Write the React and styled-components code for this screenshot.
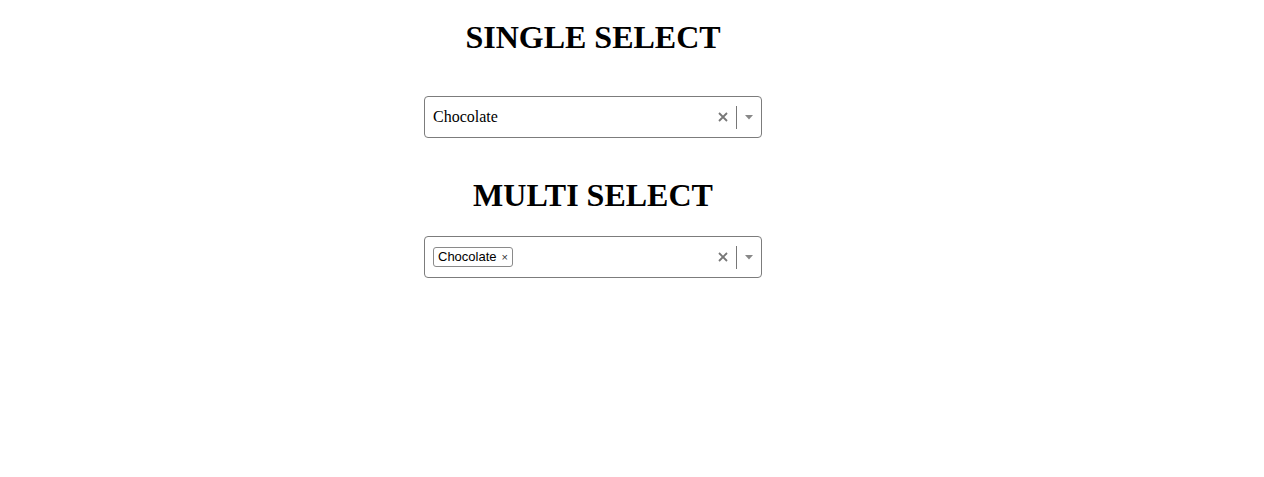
import React from "react";
import styled, { createGlobalStyle } from "styled-components";

const GlobalStyle = createGlobalStyle`
  body {
    margin: 0;
    background: #ffffff;
    font-family: "Liberation Serif", "Times New Roman", serif;
    color: #000000;
  }
`;

const PageContainer = styled.div`
  width: 1186px;
  display: flex;
  flex-direction: column;
  align-items: center;
  padding-top: 19px;
`;

const Title = styled.h1`
  margin: 0;
  font-size: 32px;
  line-height: 37px;
  font-weight: 700;
  margin-bottom: ${(p) => p.gap}px;
`;

const SelectBox = styled.div`
  box-sizing: border-box;
  width: 338px;
  height: 42px;
  border: 1px solid #7c7c7c;
  border-radius: 4px;
  display: flex;
  align-items: center;
  margin-bottom: ${(p) => p.gap}px;
`;

const ValueArea = styled.div`
  flex: 1;
  display: flex;
  align-items: center;
  padding-left: 8px;
  font-size: 16px;
`;

const Indicators = styled.div`
  display: flex;
  align-items: center;
  height: 100%;
`;

const ClearButton = styled.span`
  display: flex;
  align-items: center;
  justify-content: center;
  width: 14px;
  margin-right: 6px;
  color: #777;
`;

const Separator = styled.span`
  width: 1px;
  height: 23px;
  background: #777;
`;

const ArrowButton = styled.span`
  display: flex;
  align-items: center;
  justify-content: center;
  width: 24px;
`;

const Chip = styled.span`
  display: inline-flex;
  align-items: center;
  height: 20px;
  box-sizing: border-box;
  border: 1px solid #8a8a8a;
  border-radius: 3px;
  padding: 0 4px;
  margin-top: -1px;
  font-family: "Liberation Sans", Arial, sans-serif;
  font-size: 13px;
`;

const ChipRemove = styled.span`
  margin-left: 5px;
  font-size: 11px;
  color: #333;
`;

const CrossIcon = () => (
  <svg width="10" height="10" viewBox="0 0 10 10">
    <path d="M1 1 L9 9 M9 1 L1 9" stroke="#777" strokeWidth="1.8" />
  </svg>
);

const CaretIcon = () => (
  <svg width="8" height="5" viewBox="0 0 8 5">
    <path d="M0 0 L8 0 L4 4.5 Z" fill="#888" />
  </svg>
);

const Controls = () => (
  <Indicators>
    <ClearButton>
      <CrossIcon />
    </ClearButton>
    <Separator />
    <ArrowButton>
      <CaretIcon />
    </ArrowButton>
  </Indicators>
);

const App = () => {
  return (
    <>
      <GlobalStyle />
      <PageContainer>
        <Title gap={40}>SINGLE SELECT</Title>
        <SelectBox gap={39}>
          <ValueArea>Chocolate</ValueArea>
          <Controls />
        </SelectBox>
        <Title gap={22}>MULTI SELECT</Title>
        <SelectBox gap={0}>
          <ValueArea>
            <Chip>
              Chocolate<ChipRemove>×</ChipRemove>
            </Chip>
          </ValueArea>
          <Controls />
        </SelectBox>
      </PageContainer>
    </>
  );
};

export default App;
